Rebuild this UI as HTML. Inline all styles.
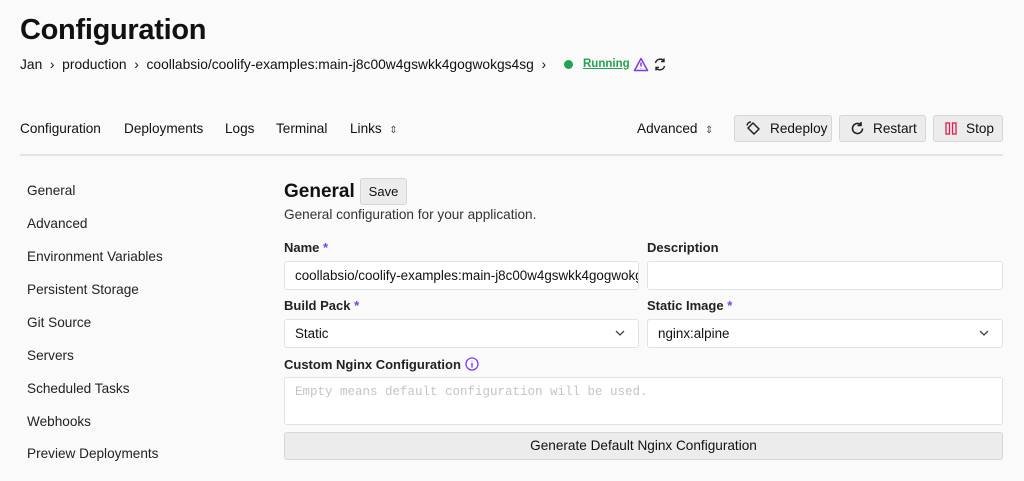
<!DOCTYPE html>
<html><head><style>
*{box-sizing:border-box;margin:0;padding:0}
body{width:1024px;height:481px;background:#fafafa;font-family:"Liberation Sans",sans-serif;color:#111;position:relative;overflow:hidden;font-size:13.6px}
.a{position:absolute;white-space:nowrap}
h1{position:absolute;left:20px;top:14px;font-size:29px;font-weight:bold;letter-spacing:-0.3px}
.btn{position:absolute;top:115px;height:27px;border:1px solid #d6d6d6;border-radius:3px;background:#ececec;display:flex;align-items:center;font-size:13.6px}
.btn svg{margin:0 8px 0 10px}
.lab{position:absolute;font-size:13px;font-weight:bold;color:#222}
.lab i{color:#7c3aed;font-style:normal}
.inp{position:absolute;height:29px;border:1px solid #e2e2e2;border-radius:3px;background:#fff;font-size:13.4px;padding:6px 10px;overflow:hidden;white-space:nowrap}
.chev{position:absolute;right:12px;top:8px}
.side{position:absolute;left:27px;font-size:13.6px;color:#222}
</style></head><body>
<h1>Configuration</h1>
<div class="a" style="left:20px;top:57px;font-size:13.8px">Jan&nbsp; ›&nbsp; production&nbsp; ›&nbsp; coollabsio/coolify-examples:main-j8c00w4gswkk4gogwokgs4sg&nbsp; ›</div>
<div class="a" style="left:564px;top:60px;width:9px;height:9px;border-radius:50%;background:#22a352"></div>
<div class="a" style="left:583px;top:58px;font-size:11.5px;font-weight:bold;color:#22a352;text-decoration:underline">Running</div>
<svg class="a" style="left:633px;top:57px" width="16" height="15" viewBox="0 0 16 15"><path d="M8 1.5L14.5 13.5H1.5Z M8 5.5V9.5 M8 11.2V11.6" fill="none" stroke="#7c3aed" stroke-width="1.5" stroke-linejoin="round"/></svg>
<svg class="a" style="left:653px;top:57px" width="14" height="15" viewBox="0 0 14 15"><path d="M2.5 6A4.8 4.8 0 0 1 11 4M11.5 9A4.8 4.8 0 0 1 3 11M11 1.5V4.5H8M3 13.5V10.5H6" fill="none" stroke="#222" stroke-width="1.4"/></svg>
<div class="a" style="left:20px;top:121px">Configuration</div>
<div class="a" style="left:124px;top:121px">Deployments</div>
<div class="a" style="left:225px;top:121px">Logs</div>
<div class="a" style="left:276px;top:121px">Terminal</div>
<div class="a" style="left:350px;top:121px">Links&nbsp; <span style="font-size:10px;color:#555">⇕</span></div>
<div class="a" style="left:637px;top:121px">Advanced&nbsp; <span style="font-size:10px;color:#555">⇕</span></div>
<div class="btn" style="left:734px;width:98px"><svg width="17" height="17" viewBox="0 0 17 17"><path d="M3 8L8 3L14 9L9 14Z M2 5.5A4 4 0 0 1 6 2" fill="none" stroke="#222" stroke-width="1.5" stroke-linejoin="round"/></svg>Redeploy</div>
<div class="btn" style="left:839px;width:87px"><svg width="15" height="15" viewBox="0 0 15 15"><path d="M12.5 7.5A5 5 0 1 1 10.5 3.5M11 1V4.5H7.5" fill="none" stroke="#222" stroke-width="1.6"/></svg>Restart</div>
<div class="btn" style="left:933px;width:70px"><svg width="14" height="15" viewBox="0 0 14 15"><rect x="2" y="2" width="3.5" height="11" fill="none" stroke="#e11d48" stroke-width="1.3"/><rect x="8.5" y="2" width="3.5" height="11" fill="none" stroke="#e11d48" stroke-width="1.3"/></svg>Stop</div>
<div class="a" style="left:20px;top:154px;width:983px;height:2px;background:#e4e4e4"></div>
<div class="side" style="top:183px">General</div>
<div class="side" style="top:216px">Advanced</div>
<div class="side" style="top:249px">Environment Variables</div>
<div class="side" style="top:282px">Persistent Storage</div>
<div class="side" style="top:315px">Git Source</div>
<div class="side" style="top:348px">Servers</div>
<div class="side" style="top:381px">Scheduled Tasks</div>
<div class="side" style="top:414px">Webhooks</div>
<div class="side" style="top:446px">Preview Deployments</div>
<div class="a" style="left:284px;top:181px;font-size:19px;font-weight:bold">General</div>
<div class="a" style="left:360px;top:178px;width:47px;height:27px;border:1px solid #d6d6d6;border-radius:3px;background:#ececec;text-align:center;line-height:25px;font-size:13px">Save</div>
<div class="a" style="left:284px;top:207px;color:#333">General configuration for your application.</div>
<div class="lab" style="left:284px;top:240px">Name <i>*</i></div>
<div class="lab" style="left:647px;top:240px">Description</div>
<div class="inp" style="left:284px;top:261px;width:355px">coollabsio/coolify-examples:main-j8c00w4gswkk4gogwokgs4sg</div>
<div class="inp" style="left:647px;top:261px;width:356px"></div>
<div class="lab" style="left:284px;top:298px">Build Pack <i>*</i></div>
<div class="lab" style="left:647px;top:298px">Static Image <i>*</i></div>
<div class="inp" style="left:284px;top:319px;width:355px">Static<svg class="chev" width="12" height="10" viewBox="0 0 12 10"><path d="M2 3L6 7L10 3" fill="none" stroke="#444" stroke-width="1.3"/></svg></div>
<div class="inp" style="left:647px;top:319px;width:356px">nginx:alpine<svg class="chev" width="12" height="10" viewBox="0 0 12 10"><path d="M2 3L6 7L10 3" fill="none" stroke="#444" stroke-width="1.3"/></svg></div>
<div class="lab" style="left:284px;top:357px">Custom Nginx Configuration</div>
<svg class="a" style="left:465px;top:357px" width="14" height="14" viewBox="0 0 14 14"><circle cx="7" cy="7" r="6" fill="none" stroke="#7c3aed" stroke-width="1.3"/><path d="M7 6V10.5M7 3.8V4.4" stroke="#7c3aed" stroke-width="1.4"/></svg>
<div class="inp" style="left:284px;top:377px;width:719px;height:48px;font-family:'Liberation Mono',monospace;color:#c4c4c4;font-size:12.5px;padding:7px 10px">Empty means default configuration will be used.</div>
<div class="a" style="left:284px;top:432px;width:719px;height:28px;border:1px solid #d6d6d6;border-radius:3px;background:#ececec;text-align:center;line-height:26px">Generate Default Nginx Configuration</div>
</body></html>
